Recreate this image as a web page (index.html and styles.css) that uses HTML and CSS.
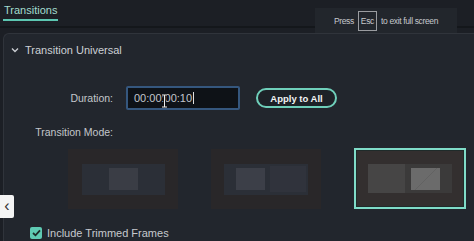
FILE: index.html
```html
<!DOCTYPE html>
<html lang="en">
<head>
  <meta charset="UTF-8">
  <title>Transitions</title>
  <link rel="stylesheet" href="styles.css">
</head>
<body>
  <div class="topbar">
    <div class="tab">Transitions</div>
  </div>

  <div class="esc-tip">Press <span class="key">Esc</span> to exit full screen</div>

  <div class="panel">
    <div class="panel-head">
      <svg class="chev" width="8" height="6" viewBox="0 0 8 6"><path d="M1 1.5 L4 4.5 L7 1.5" fill="none" stroke="#c9ccd1" stroke-width="1.4"/></svg>
      <span>Transition Universal</span>
    </div>

    <div class="row duration-row">
      <label class="lbl">Duration:</label>
      <div class="input">00:00:00:10<span class="caret"></span>
        <svg class="ibeam" width="7" height="14" viewBox="0 0 7 14"><path d="M1 1 H6 M3.5 1 V13 M1 13 H6" stroke="#111" stroke-width="2.4" fill="none"/><path d="M1 1 H6 M3.5 1 V13 M1 13 H6" stroke="#eee" stroke-width="1" fill="none"/></svg>
      </div>
      <button class="apply">Apply to All</button>
    </div>

    <div class="row mode-row">
      <label class="lbl">Transition Mode:</label>
    </div>

    <div class="modes">
      <div class="mode m1">
        <div class="inner"><div class="sq"></div></div>
      </div>
      <div class="mode m2">
        <div class="inner"><div class="sq"></div><div class="sq dim"></div></div>
      </div>
      <div class="mode m3 selected">
        <div class="inner"><div class="sq"></div><div class="pane"><div class="sq light"></div></div></div>
      </div>
    </div>

    <div class="check-row">
      <span class="checkbox">
        <svg width="9" height="8" viewBox="0 0 9 8"><path d="M1 4 L3.5 6.3 L8 1.3" fill="none" stroke="#1d2a28" stroke-width="1.8"/></svg>
      </span>
      <span>Include Trimmed Frames</span>
    </div>
  </div>

  <div class="side-btn">&lsaquo;</div>
</body>
</html>
```

FILE: styles.css
```css
body {
  margin: 0;
  width: 474px;
  height: 241px;
  overflow: hidden;
  background: #1c1f25;
  font-family: "Liberation Sans", Arial, sans-serif;
  color: #c9ccd2;
  position: relative;
}
.topbar {
  height: 26px;
  border-bottom: 2px solid #14171b;
  padding-left: 3px;
}
.tab {
  display: inline-block;
  font-size: 11px;
  color: #a3dccf;
  padding: 3px 1px 0;
  height: 15px;
  border-bottom: 2px solid #5cc6b1;
}
.esc-tip {
  position: absolute;
  left: 315px;
  top: 8px;
  width: 142px;
  height: 25px;
  background: #22262c;
  font-size: 8.5px;
  letter-spacing: -0.35px;
  color: #c6c8cc;
  display: flex;
  align-items: center;
  justify-content: center;
  gap: 4px;
}
.key {
  border: 1px solid #9a9ca0;
  padding: 4px 2px;
}
.panel {
  margin: 5px 0 0 3px;
  background: #22262d;
  border-top: 1px solid #30343b;
  border-left: 1px solid #30343b;
  border-radius: 6px 0 0 0;
  height: 207px;
}
.panel-head {
  height: 31px;
  display: flex;
  align-items: center;
  gap: 6px;
  padding-left: 7px;
  font-size: 11px;
  color: #cdd0d5;
}
.row {
  display: grid;
  grid-template-columns: 109px auto auto;
  justify-content: start;
  column-gap: 13px;
  align-items: center;
}
.lbl {
  text-align: right;
  font-size: 10.5px;
  color: #c3c6cb;
}
.duration-row {
  margin-top: 21px;
}
.input {
  position: relative;
  width: 104px;
  height: 20px;
  border: 2px solid #35577e;
  border-radius: 2px;
  background: #0e1217;
  font-size: 11px;
  color: #c2c6cc;
  display: flex;
  align-items: center;
  padding-left: 6px;
}
.caret {
  width: 1px;
  height: 12px;
  background: #e0e0e0;
  margin-left: 1px;
}
.ibeam {
  position: absolute;
  left: 33px;
  top: 6px;
}
.apply {
  margin-left: 3px;
  width: 81px;
  height: 20px;
  border: 2px solid #6fcfba;
  border-radius: 10px;
  background: #1d2127;
  color: #f1f3f4;
  font-family: inherit;
  font-size: 9.5px;
  font-weight: bold;
  padding: 0;
}
.mode-row {
  margin-top: 16px;
}
.modes {
  display: flex;
  gap: 33px;
  margin: 11px 0 0 64px;
  align-items: flex-start;
}
.mode {
  width: 110px;
  height: 60px;
  background: #292729;
  display: flex;
  align-items: center;
  justify-content: center;
}
.mode .inner {
  width: 83px;
  height: 31px;
  background: #2b2f37;
  display: flex;
  align-items: center;
  justify-content: center;
  gap: 5px;
}
.m1 .sq {
  width: 29px;
  height: 22px;
  background: #3a3d45;
}
.m2 .inner {
  justify-content: flex-start;
  padding-left: 12px;
  width: 72px;
}
.m2 .sq {
  width: 29px;
  height: 22px;
  background: #3c3f48;
}
.m2 .sq.dim {
  width: 36px;
  height: 26px;
  background: #30333c;
}
.mode.selected {
  width: 108px;
  height: 57px;
  border: 2px solid #7fdcc8;
  box-shadow: inset 0 0 0 1px #1f2b2a;
  background: #332f2f;
  margin-top: -1px;
}
.m3 .inner {
  width: 84px;
  height: 29px;
  background: transparent;
  gap: 0;
  justify-content: flex-start;
}
.m3 .sq {
  width: 37px;
  height: 29px;
  background: #464545;
}
.m3 .pane {
  width: 47px;
  height: 29px;
  background: #3b3a3a;
  display: flex;
  align-items: center;
  padding-left: 6px;
  box-sizing: border-box;
}
.m3 .sq.light {
  width: 29px;
  height: 22px;
  background: linear-gradient(135deg, #6b6b6b 49%, #5a5a5a 50%, #6b6b6b 52%);
}
.check-row {
  display: flex;
  align-items: center;
  gap: 5px;
  margin: 18px 0 0 26px;
  font-size: 11px;
  color: #c6c9ce;
}
.checkbox {
  width: 12px;
  height: 12px;
  border-radius: 2px;
  background: #5fcab3;
  display: flex;
  align-items: center;
  justify-content: center;
}
.side-btn {
  position: absolute;
  left: 0;
  top: 195px;
  width: 14px;
  height: 23px;
  background: #f4f4f4;
  color: #333;
  font-size: 16px;
  line-height: 21px;
  text-align: center;
  border-radius: 0 2px 2px 0;
}
```
